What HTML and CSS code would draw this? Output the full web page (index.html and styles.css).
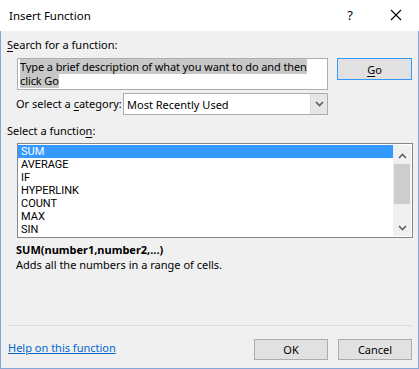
FILE: index.html
```html
<!DOCTYPE html>
<html lang="en">
<head>
  <meta charset="UTF-8" />
  <meta name="viewport" content="width=device-width, initial-scale=1" />
  <title>Insert Function</title>
  <link rel="stylesheet" href="styles.css">
</head>
<body>
  <div class="dialog">
    <div class="titlebar">
      <span class="title">Insert Function</span>
      <span class="help-icon">?</span>
      <svg class="close-icon" width="12" height="12" viewBox="0 0 12 12">
        <path d="M1 1 L11 11 M11 1 L1 11" stroke="#000" stroke-width="1.1" fill="none" />
      </svg>
    </div>

    <div class="content">
      <div class="label top-label"><u>S</u>earch for a function:</div>

      <div class="search-row">
        <div class="search-box">
          <span class="sel">Type a brief description of what you want to do and then</span><br>
          <span class="sel">click Go</span>
        </div>
        <button class="btn btn-go"><u>G</u>o</button>
      </div>

      <div class="category-row">
        <span class="label cat-label">Or select a <u>c</u>ategory:</span>
        <div class="select">
          <span class="select-text">Most Recently Used</span>
          <span class="select-arrow">
            <svg width="9" height="6" viewBox="0 0 9 6">
              <path d="M1 1 L4.5 4.5 L8 1" stroke="#606060" stroke-width="1.6" fill="none" />
            </svg>
          </span>
        </div>
      </div>

      <div class="label fn-label">Select a functio<u>n</u>:</div>

      <div class="listbox">
        <ul class="items">
          <li class="active">SUM</li>
          <li>AVERAGE</li>
          <li>IF</li>
          <li>HYPERLINK</li>
          <li>COUNT</li>
          <li>MAX</li>
          <li>SIN</li>
        </ul>
        <div class="scrollbar">
          <svg class="arrow-up" width="9" height="6" viewBox="0 0 9 6">
            <path d="M1 5 L4.5 1.5 L8 5" stroke="#606060" stroke-width="1.6" fill="none" />
          </svg>
          <div class="thumb"></div>
          <svg class="arrow-down" width="9" height="6" viewBox="0 0 9 6">
            <path d="M1 1 L4.5 4.5 L8 1" stroke="#606060" stroke-width="1.6" fill="none" />
          </svg>
        </div>
      </div>

      <div class="syntax">SUM(number1,number2,...)</div>
      <div class="desc">Adds all the numbers in a range of cells.</div>

      <div class="spacer"></div>
      <div class="separator"></div>

      <div class="footer">
        <a class="help-link" href="#">Help on this function</a>
        <div class="buttons">
          <button class="btn">OK</button>
          <button class="btn">Cancel</button>
        </div>
      </div>
    </div>
  </div>
</body>
</html>
```

FILE: styles.css
```css
* {
  box-sizing: border-box;
}
body {
  margin: 0;
  font-family: "Noto Sans", "Open Sans", sans-serif;
  font-size: 11px;
  color: #000;
  background: #fff;
}
u {
  text-decoration-thickness: 1px;
  text-underline-offset: 2px;
}

.dialog {
  width: 419px;
  height: 369px;
  display: flex;
  flex-direction: column;
}

.titlebar {
  height: 31px;
  background: #fff;
  display: flex;
  align-items: center;
  padding-left: 9px;
  font-size: 11.5px;
}
.title {
  flex: 1;
}
.help-icon {
  font-size: 13px;
  margin-right: 37px;
  margin-top: -2px;
}
.close-icon {
  margin-right: 17px;
  margin-top: -1px;
}

.content {
  flex: 1;
  background: #f0f0f0;
  border: 1px solid #84a7d8;
  border-top: none;
  display: flex;
  flex-direction: column;
  padding: 0 6px 0 6px;
}

.label {
  line-height: 14px;
}
.top-label {
  margin-top: 7px;
}

.search-row {
  display: flex;
  align-items: flex-start;
  margin-top: 6px;
  padding-left: 10px;
}
.search-box {
  width: 311px;
  height: 32px;
  background: #fff;
  border: 1px solid #abadb3;
  padding: 1px 2px;
  line-height: 14px;
  letter-spacing: -0.1px;
}
.sel {
  background: #c8c8c8;
}

.btn {
  font-family: inherit;
  font-size: 11px;
  width: 74px;
  height: 21px;
  background: #e1e1e1;
  border: 1px solid #adadad;
  padding: 0;
  color: #000;
}
.btn-go {
  margin-left: 9px;
  height: 22px;
  width: 75px;
  border-color: #3399ff;
}

.category-row {
  display: flex;
  align-items: center;
  margin-top: 3px;
  padding-left: 9px;
}
.cat-label {
  width: 107px;
}
.select {
  width: 205px;
  height: 22px;
  background: #fff;
  border: 1px solid #abadb3;
  display: flex;
  align-items: center;
}
.select-text {
  flex: 1;
  padding-left: 3px;
}
.select-arrow {
  width: 17px;
  height: 20px;
  background: #e6e6e6;
  border-left: 1px solid #d9d9d9;
  display: flex;
  align-items: center;
  justify-content: center;
}

.fn-label {
  margin-top: 9px;
}

.listbox {
  margin-top: 5px;
  margin-left: 10px;
  width: 396px;
  height: 95px;
  background: #fff;
  border: 1px solid #828790;
  display: flex;
  padding: 1px 1px 1px 0;
}
.items {
  flex: 1;
  list-style: none;
  margin: 0;
  padding: 0;
  font-family: Roboto, "Noto Sans", sans-serif;
  font-size: 11px;
}
.items li {
  height: 13px;
  line-height: 13px;
  padding-left: 3px;
}
.items li.active {
  background: #3399ff;
  color: #fff;
}
.scrollbar {
  width: 18px;
  background: #f0f0f0;
  display: flex;
  flex-direction: column;
  align-items: center;
}
.arrow-up {
  margin-top: 8px;
}
.thumb {
  width: 16px;
  height: 40px;
  background: #cdcdcd;
  margin-top: 5px;
}
.arrow-down {
  margin-top: auto;
  margin-bottom: 5px;
}

.syntax {
  font-weight: bold;
  margin-top: 4px;
  padding-left: 9px;
  line-height: 15px;
}
.desc {
  padding-left: 9px;
  line-height: 15px;
}

.spacer {
  flex: 1;
}
.separator {
  height: 1px;
  background: #dadada;
  margin: 0 0 0 1px;
}

.footer {
  display: flex;
  align-items: flex-start;
  justify-content: space-between;
  height: 42px;
  padding: 13px 0 8px 1px;
}
.help-link {
  color: #0066cc;
  text-decoration: underline;
  font-size: 11px;
  margin-top: 1px;
}
.buttons {
  display: flex;
  gap: 10px;
}
```
